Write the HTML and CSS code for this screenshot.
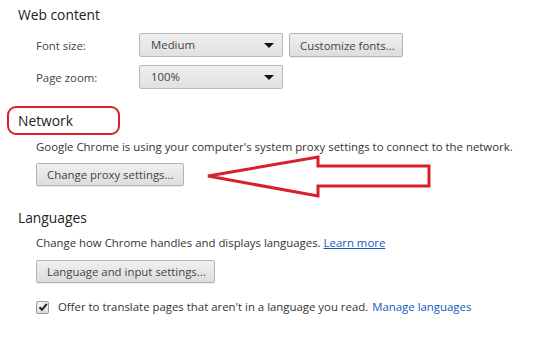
FILE: index.html
```html
<!DOCTYPE html>
<html lang="en">

<head>
    <meta charset="UTF-8">
    <title>Settings</title>
    <link rel="stylesheet" href="styles.css">
</head>

<body>
    <div class="page">
        <section class="section">
            <h3 class="heading">Web content</h3>
            <div class="rows">
                <div class="row">
                    <span class="label">Font size:</span>
                    <div class="select">Medium<span class="caret"></span></div>
                    <button class="btn">Customize fonts...</button>
                </div>
                <div class="row">
                    <span class="label">Page zoom:</span>
                    <div class="select">100%<span class="caret"></span></div>
                </div>
            </div>
        </section>

        <section class="section network">
            <h3 class="heading">Network<span class="ring"></span></h3>
            <p class="text">Google Chrome is using your computer's system proxy settings to connect to the network.</p>
            <button class="btn proxy">Change proxy settings...</button>
            <svg class="arrow" width="240" height="50" viewBox="0 0 240 50">
                <polygon points="3,23 113,4 113,13 224,13 224,33 113,33 113,43" fill="none" stroke="#d7202b" stroke-width="3" stroke-linejoin="miter"/>
            </svg>
        </section>

        <section class="section">
            <h3 class="heading">Languages</h3>
            <p class="text">Change how Chrome handles and displays languages. <a href="#">Learn more</a></p>
            <button class="btn">Language and input settings...</button>
            <label class="check">
                <span class="box">
                    <svg width="10" height="10" viewBox="0 0 10 10"><path d="M1.5 5.2 L4 7.8 L8.8 1.8" fill="none" stroke="#222" stroke-width="2"/></svg>
                </span>
                Offer to translate pages that aren't in a language you read. <a class="plain" href="#">Manage languages</a>
            </label>
        </section>
    </div>
</body>

</html>
```

FILE: styles.css
```css
* {
    margin: 0;
    padding: 0;
    box-sizing: border-box;
    font-family: 'Open Sans', sans-serif;
}

body {
    background: #fff;
    color: #333;
    width: 560px;
    height: 344px;
    overflow: hidden;
}

.page {
    padding: 5px 0 0 18px;
}

.section {
    position: relative;
    margin-bottom: 22px;
}

.heading {
    position: relative;
    width: fit-content;
    font-size: 13.8px;
    font-weight: normal;
    line-height: 20px;
    color: #222;
}

.rows {
    display: flex;
    flex-direction: column;
    gap: 8px;
    margin-top: 8px;
    padding-left: 18px;
}

.row {
    display: flex;
    align-items: center;
    height: 24px;
}

.label {
    width: 103px;
    font-size: 11.4px;
    color: #444;
}

.select {
    position: relative;
    width: 144px;
    height: 24px;
    line-height: 22px;
    padding-left: 11px;
    font-size: 11.4px;
    color: #444;
    border: 1px solid #b9b9b9;
    border-radius: 2px;
    background: linear-gradient(#f0f0f0, #e0e0e0);
}

.caret {
    position: absolute;
    right: 8px;
    top: 9px;
    border-left: 5px solid transparent;
    border-right: 5px solid transparent;
    border-top: 5px solid #111;
}

.btn {
    height: 24px;
    padding: 0 10px;
    font-size: 11.4px;
    color: #444;
    text-align: left;
    white-space: nowrap;
    border: 1px solid #b4b4b4;
    border-radius: 2px;
    background: linear-gradient(#f0f0f0, #dddddd);
    box-shadow: 0 1px 0 rgba(0, 0, 0, 0.08);
}

.row .btn {
    margin-left: 6px;
    width: 114px;
}

.text {
    margin: 7px 0 7px 18px;
    font-size: 11.4px;
    line-height: 18px;
    color: #333;
}

.section > .btn {
    display: block;
    margin-left: 18px;
    height: 23px;
}

.proxy {
    width: 148px;
}

.section:last-child > .btn {
    width: 179px;
    margin-top: 8px;
}

.section:last-child .text {
    margin-top: 6px;
    margin-bottom: 0;
}

a {
    color: #1558c0;
}

a.plain {
    text-decoration: none;
}

.check {
    display: flex;
    align-items: center;
    margin: 15px 0 0 18px;
    font-size: 11.4px;
    line-height: 18px;
    color: #333;
}

.check a {
    margin-left: 4px;
}

.box {
    display: inline-flex;
    align-items: center;
    justify-content: center;
    width: 13px;
    height: 13px;
    margin-right: 9px;
    border: 1px solid #999;
    border-radius: 2px;
    background: linear-gradient(#f4f4f4, #dedede);
}

/* annotation overlays */
.ring {
    position: absolute;
    left: -11px;
    top: -5px;
    width: 113px;
    height: 29px;
    border: 2.5px solid #d7202b;
    border-radius: 9px;
}

.arrow {
    position: absolute;
    left: 187px;
    top: 42px;
}
```
